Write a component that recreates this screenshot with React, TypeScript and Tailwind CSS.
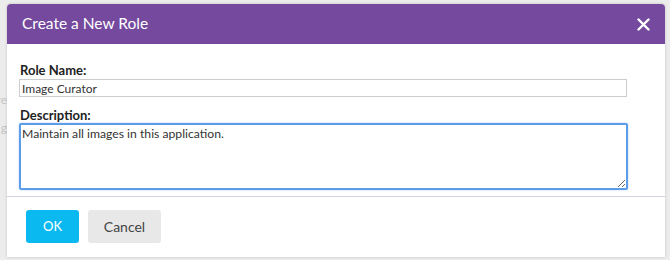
import React, { useState } from 'react';

export default function App() {
  const [name, setName] = useState('Image Curator');
  const [desc, setDesc] = useState('Maintain all images in this application.');

  return (
    <div
      className="w-[670px] h-[260px] bg-[#ececec] flex overflow-hidden"
      style={{ fontFamily: 'Lato, "Open Sans", sans-serif' }}
    >
      {/* page behind the dialog */}
      <div className="w-[7px] shrink-0 overflow-hidden flex flex-col items-end pt-[92px] text-[12px] text-[#c4c4c4] leading-[16px]">
        <span className="whitespace-nowrap">re</span>
        <span className="whitespace-nowrap mt-[12px]">g</span>
      </div>

      <div className="mt-[4px] w-[658px] h-[253px] bg-white rounded-t-[4px] shadow-[0_0_3px_rgba(0,0,0,0.18)] flex flex-col">
        {/* Header */}
        <div className="h-[40px] bg-[#74499e] rounded-t-[4px] flex items-center justify-between pl-[15px] pr-[15px]">
          <span className="text-white text-[15.5px] leading-none">Create a New Role</span>
          <button className="w-[14px] h-[14px] flex items-center justify-center text-white">
            <svg width="13" height="13" viewBox="0 0 13 13" fill="none" stroke="currentColor" strokeWidth="2.4" strokeLinecap="round">
              <path d="M1.5 1.5 L11.5 11.5 M11.5 1.5 L1.5 11.5" />
            </svg>
          </button>
        </div>

        {/* Body */}
        <div className="pl-[12px] pt-[18px] pb-[6px] border-b border-[#d4d4dc]">
          <label className="block pl-[1px] text-[13px] font-bold text-[#222] leading-[17px]">Role Name:</label>
          <input
            type="text"
            value={name}
            onChange={(e) => setName(e.target.value)}
            className="block w-[608px] h-[18px] border border-[#cccccc] px-[2px] text-[12px] text-[#333] leading-[16px] outline-none"
          />
          <label className="block pl-[1px] mt-[10px] text-[13px] font-bold text-[#222] leading-[16px]">Description:</label>
          <textarea
            value={desc}
            onChange={(e) => setDesc(e.target.value)}
            className="block w-[609px] h-[67px] border-2 border-[#5d9ce8] rounded-[2px] px-[1px] py-[1px] text-[12.2px] text-[#333] leading-[15px] outline-none shadow-[0_0_2px_rgba(80,150,230,0.5)]"
          />
        </div>

        {/* Footer */}
        <div className="flex gap-[9px] pl-[19px] pt-[13px]">
          <button className="w-[53px] h-[33px] rounded-[3px] bg-[#0bb9f1] text-white text-[13px]">OK</button>
          <button className="w-[73px] h-[33px] rounded-[3px] bg-[#e8e8e8] text-[#444] text-[14px]">Cancel</button>
        </div>
      </div>
    </div>
  );
}
